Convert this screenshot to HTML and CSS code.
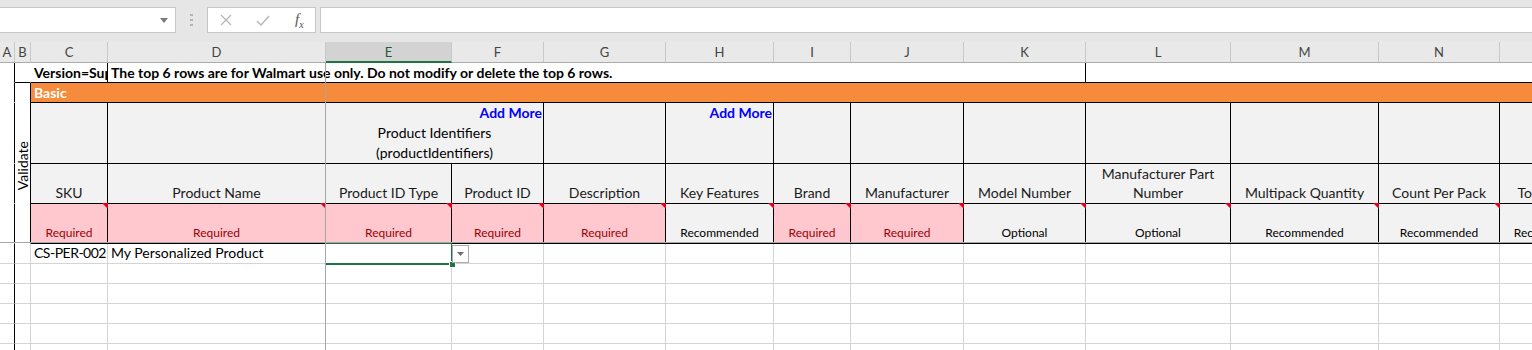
FILE: index.html
```html
<!DOCTYPE html>
<html lang="en">
<head>
    <meta charset="UTF-8">
    <meta name="viewport" content="width=device-width, initial-scale=1.0">
    <title>Walmart Item Setup</title>
    <link rel="stylesheet" href="styles.css">
</head>
<body>

    <div class="toolbar">
        <div class="name-box">
            <svg class="caret" width="8" height="5" viewBox="0 0 8 5"><path d="M0 0h8L4 5z" fill="#7a7a7a"/></svg>
        </div>
        <div class="grip">
            <svg width="3" height="12" viewBox="0 0 3 12"><rect x="0" y="0" width="3" height="2" fill="#b3b3b3"/><rect x="0" y="5" width="3" height="2" fill="#b3b3b3"/><rect x="0" y="10" width="3" height="2" fill="#b3b3b3"/></svg>
        </div>
        <div class="fx-buttons">
            <svg class="fx-btn" width="12" height="12" viewBox="0 0 12 12"><path d="M1 1l10 10M11 1L1 11" stroke="#b8b8b8" stroke-width="1.4" fill="none"/></svg>
            <svg class="fx-btn" width="14" height="11" viewBox="0 0 14 11"><path d="M1 6l4 4 8-9" stroke="#b8b8b8" stroke-width="1.5" fill="none"/></svg>
            <span class="fx-label">f<sub>x</sub></span>
        </div>
        <div class="formula-input"></div>
    </div>

    <div class="sheet">
        <table class="grid">
            <colgroup>
                <col class="w-a"><col class="w-b"><col class="w-c"><col class="w-d"><col class="w-e">
                <col class="w-f"><col class="w-g"><col class="w-h"><col class="w-i"><col class="w-j">
                <col class="w-k"><col class="w-l"><col class="w-m"><col class="w-n"><col class="w-o">
            </colgroup>

            <tr class="heads">
                <th>A</th><th>B</th><th>C</th><th>D</th><th class="picked">E</th>
                <th>F</th><th>G</th><th>H</th><th>I</th><th>J</th>
                <th>K</th><th>L</th><th>M</th><th>N</th><th>O</th>
            </tr>

            <!-- row 1: version / warning -->
            <tr class="r20">
                <td class="col-a top"></td>
                <td class="b1"></td>
                <td class="note clip edge">Version=Supplier</td>
                <td class="note edge" colspan="8">The top 6 rows are for Walmart use only. Do not modify or delete the top 6 rows.</td>
                <td class="note" colspan="4"></td>
            </tr>

            <!-- row 2: group band -->
            <tr class="r20">
                <td class="col-a top"></td>
                <td class="validate" rowspan="4"><span>Validate</span></td>
                <td class="band" colspan="13">Basic</td>
            </tr>

            <!-- row 3: attribute groups -->
            <tr class="r60">
                <td class="col-a top"></td>
                <td class="group"></td>
                <td class="group"></td>
                <td class="group" colspan="2">
                    <div class="add-more">Add More</div>
                    <div class="group-name">Product Identifiers<br>(productIdentifiers)</div>
                </td>
                <td class="group"></td>
                <td class="group"><div class="add-more">Add More</div></td>
                <td class="group"></td>
                <td class="group"></td>
                <td class="group"></td>
                <td class="group"></td>
                <td class="group"></td>
                <td class="group"></td>
                <td class="group"></td>
            </tr>

            <!-- row 4: field names -->
            <tr class="r40">
                <td class="col-a top"></td>
                <td class="field">SKU</td>
                <td class="field">Product Name</td>
                <td class="field">Product ID Type</td>
                <td class="field">Product ID</td>
                <td class="field">Description</td>
                <td class="field">Key Features</td>
                <td class="field">Brand</td>
                <td class="field">Manufacturer</td>
                <td class="field">Model Number</td>
                <td class="field">Manufacturer Part Number</td>
                <td class="field">Multipack Quantity</td>
                <td class="field">Count Per Pack</td>
                <td class="field clip">Total Count</td>
            </tr>

            <!-- row 5: requirement level -->
            <tr class="r40">
                <td class="col-a top"></td>
                <td class="level required">Required</td>
                <td class="level required">Required</td>
                <td class="level required">Required</td>
                <td class="level required">Required</td>
                <td class="level required">Required</td>
                <td class="level">Recommended</td>
                <td class="level required">Required</td>
                <td class="level required">Required</td>
                <td class="level">Optional</td>
                <td class="level">Optional</td>
                <td class="level">Recommended</td>
                <td class="level">Recommended</td>
                <td class="level clip">Recommended</td>
            </tr>

            <!-- data -->
            <tr class="r20">
                <td class="col-a"></td><td></td>
                <td class="value clip tight">CS-PER-002</td>
                <td class="value clip">My Personalized Product</td>
                <td class="active">
                    <div class="sel-box"><span class="fill-handle"></span></div>
                    <div class="list-btn"><svg width="7" height="4" viewBox="0 0 7 4"><path d="M0 0h7L3.5 4z" fill="#6f6f6f"/></svg></div>
                </td>
                <td></td><td></td><td></td><td></td><td></td><td></td><td></td><td></td><td></td><td></td>
            </tr>
            <tr class="r20">
                <td class="col-a"></td><td></td><td></td><td></td><td></td><td></td><td></td><td></td>
                <td></td><td></td><td></td><td></td><td></td><td></td><td></td>
            </tr>
            <tr class="r20">
                <td class="col-a"></td><td></td><td></td><td></td><td></td><td></td><td></td><td></td>
                <td></td><td></td><td></td><td></td><td></td><td></td><td></td>
            </tr>
            <tr class="r20">
                <td class="col-a"></td><td></td><td></td><td></td><td></td><td></td><td></td><td></td>
                <td></td><td></td><td></td><td></td><td></td><td></td><td></td>
            </tr>
            <tr class="r20">
                <td class="col-a"></td><td></td><td></td><td></td><td></td><td></td><td></td><td></td>
                <td></td><td></td><td></td><td></td><td></td><td></td><td></td>
            </tr>
            <tr class="r20">
                <td class="col-a"></td><td></td><td></td><td></td><td></td><td></td><td></td><td></td>
                <td></td><td></td><td></td><td></td><td></td><td></td><td></td>
            </tr>
        </table>

        <!-- freeze pane dividers -->
        <div class="freeze-col"></div>
        <div class="freeze-row"></div>
    </div>

</body>
</html>
```

FILE: styles.css
```css
body {
    margin: 0;
    width: 1532px;
    height: 350px;
    overflow: hidden;
    background-color: #fff;
    font-family: Lato, "Open Sans", sans-serif;
    color: #000;
}

/* formula bar */
.toolbar {
    height: 42px;
    box-sizing: border-box;
    padding-top: 7px;
    background-color: #e6e6e6;
    display: flex;
    align-items: flex-start;
}
.name-box {
    width: 176px;
    height: 26px;
    box-sizing: border-box;
    background-color: #fff;
    border: 1px solid #c6c6c6;
    border-left: none;
    display: flex;
    align-items: center;
    justify-content: flex-end;
    padding-right: 7px;
}
.grip {
    width: 31px;
    height: 26px;
    display: flex;
    align-items: center;
    justify-content: center;
}
.fx-buttons {
    width: 109px;
    height: 26px;
    box-sizing: border-box;
    background-color: #fff;
    border: 1px solid #c6c6c6;
    display: flex;
    align-items: center;
    padding-left: 12px;
}
.fx-btn:first-child {
    margin-right: 24px;
}
.fx-label {
    margin-left: 25px;
    font-family: "Liberation Serif", serif;
    font-style: italic;
    font-size: 15px;
    color: #555;
}
.fx-label sub {
    font-size: 10px;
}
.formula-input {
    flex: 1;
    height: 26px;
    box-sizing: border-box;
    margin-left: 4px;
    background-color: #fff;
    border: 1px solid #c6c6c6;
    border-right: none;
}

/* sheet */
.sheet {
    position: relative;
}
.grid {
    table-layout: fixed;
    border-collapse: separate;
    border-spacing: 0;
    width: 1606px;
}
.w-a { width: 15px; }
.w-b { width: 16px; }
.w-c { width: 77px; }
.w-d { width: 218px; }
.w-e { width: 126px; }
.w-f { width: 92px; }
.w-g { width: 122px; }
.w-h { width: 108px; }
.w-i { width: 77px; }
.w-j { width: 113px; }
.w-k { width: 122px; }
.w-l { width: 145px; }
.w-m { width: 148px; }
.w-n { width: 121px; }
.w-o { width: 107px; }

.grid th,
.grid td {
    box-sizing: border-box;
    padding: 0 3px;
    border-right: 1px solid #d4d4d4;
    border-bottom: 1px solid #d4d4d4;
    font-size: 14px;
    white-space: nowrap;
}

.heads { height: 21px; }
.r20 { height: 20px; }
.r40 { height: 40px; }
.r60 { height: 60px; }

.heads th {
    padding: 0;
    background-color: #e9e9e9;
    border-right-color: #c8c8c8;
    border-bottom-color: #ababab;
    font-weight: normal;
    font-size: 13px;
    color: #444;
    text-align: center;
}
.heads th.picked {
    background-color: #d3d3d3;
    color: #1f5a39;
    border-bottom: 2px solid #217346;
}

.col-a {
    border-right-color: #000 !important;
}
.col-a.top {
    border-bottom-color: #fff;
}
.clip {
    overflow: hidden;
    text-overflow: clip;
}

/* row 1 */
.b1 {
    border-right-color: #fff !important;
    border-bottom-color: #000 !important;
}
.note {
    font-weight: bold;
    border-bottom-color: #000 !important;
    border-right-color: #fff !important;
}
.note.edge {
    border-right-color: #000 !important;
}

/* row 2 */
.band {
    background-color: #f68b3c;
    color: #fff;
    font-weight: bold;
    border-right: none !important;
    border-bottom-color: #000 !important;
}
.validate {
    border-right-color: #000 !important;
    border-bottom-color: #fff !important;
    text-align: center;
    padding: 8px 0 0 !important;
}
.validate span {
    display: inline-block;
    writing-mode: vertical-rl;
    transform: rotate(180deg);
    font-size: 14px;
    line-height: 14px;
}

/* rows 3-5 */
.group,
.field,
.level {
    background-color: #f2f2f2;
    border-right-color: #000 !important;
    border-bottom-color: #000 !important;
}
.group {
    vertical-align: top;
    line-height: 20px;
}
.add-more {
    text-align: right;
    margin-right: -2px;
    font-weight: bold;
    color: #0000ff;
}
.group-name {
    text-align: center;
}
.grid td.field {
    vertical-align: bottom;
    text-align: center;
    line-height: 19px;
    padding-bottom: 1px;
    white-space: normal;
    color: #1a1a1a;
}
.grid td.field.clip {
    white-space: nowrap;
}
.grid td.level {
    position: relative;
    vertical-align: bottom;
    text-align: center;
    font-size: 12px;
    line-height: 19px;
    padding-bottom: 1px;
}
.level::after {
    content: "";
    position: absolute;
    top: -1px;
    right: -1px;
    border-top: 6px solid #e0001b;
    border-left: 6px solid transparent;
}
.required {
    background-color: #ffc7ce;
    color: #9c0006;
}

/* data */
.grid td.value {
    line-height: 17px;
    padding-bottom: 2px;
}
.tight {
    letter-spacing: -0.5px;
}
.active {
    position: relative;
}
.sel-box {
    position: absolute;
    left: -1px;
    top: -1px;
    right: -1px;
    bottom: -2px;
    border: 1px solid #217346;
    border-bottom-width: 2px;
}
.fill-handle {
    position: absolute;
    right: -4px;
    bottom: -4px;
    width: 5px;
    height: 5px;
    background-color: #217346;
    outline: 1px solid #fff;
}
.list-btn {
    position: absolute;
    left: calc(100% + 1px);
    top: 1px;
    width: 17px;
    height: 18px;
    box-sizing: border-box;
    background-color: #fff;
    border: 1px solid #ababab;
    display: flex;
    align-items: center;
    justify-content: center;
}

.freeze-col {
    position: absolute;
    left: 325px;
    top: 21px;
    bottom: 0;
    width: 1px;
    background-color: #a6a6a6;
}
.freeze-row {
    position: absolute;
    left: 0;
    right: 0;
    top: 200px;
    height: 1px;
    background-color: #a6a6a6;
}
```
